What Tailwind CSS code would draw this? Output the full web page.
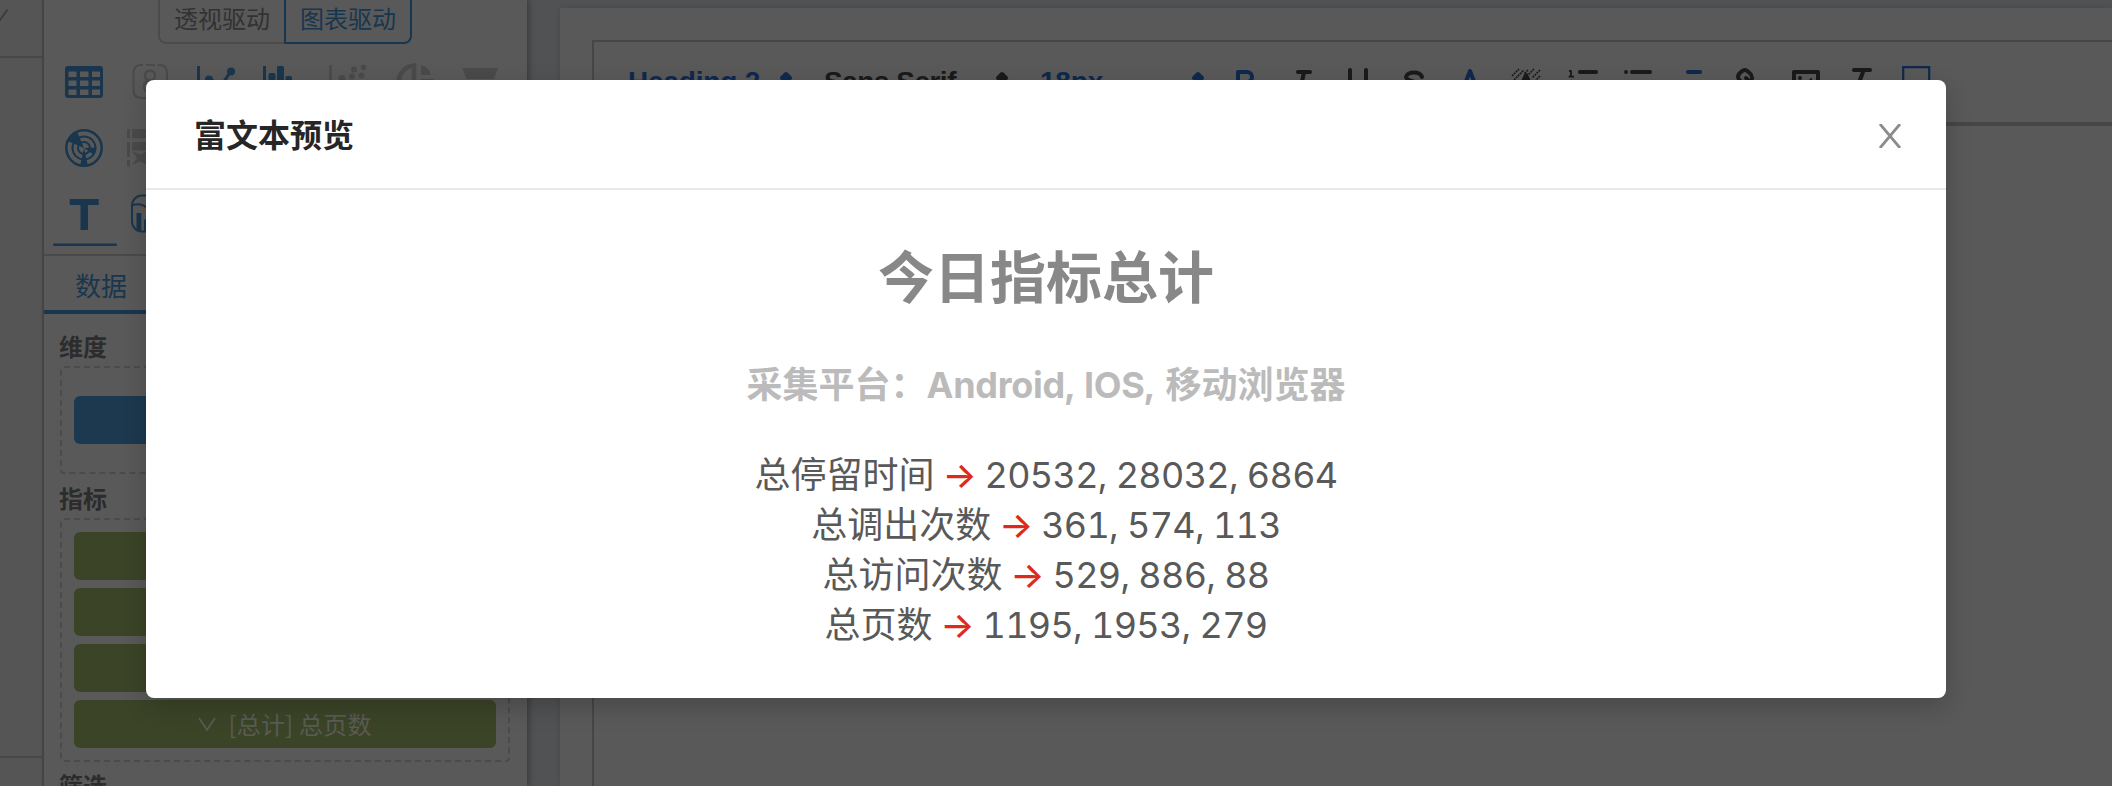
<!DOCTYPE html>
<html lang="zh"><head><meta charset="utf-8"><title>富文本预览</title>
<script src="https://cdn.jsdelivr.net/npm/@tailwindcss/browser@4"></script></head>
<body class="relative h-[786px] w-[2112px] overflow-hidden bg-[#505254] font-['Inter','Noto_Sans_CJK_SC',sans-serif]">
<div class="flex h-full" aria-hidden="true">
  <!-- far left strip -->
  <div class="flex w-[44px] shrink-0 flex-col border-r-2 border-[#484848] bg-[#555555]">
    <div class="h-[58px] shrink-0 border-b-2 border-[#484848]"><svg class="h-[50px] w-[20px]" viewBox="0 0 20 50"><path d="M-2 23L7.500 9.500" stroke="#3c3c3c" stroke-width="1.800"/></svg></div>
    <div class="h-[700px] shrink-0 border-b-2 border-[#484848]"></div>
  </div>
  <!-- chart configuration panel -->
  <div class="flex w-[483px] shrink-0 flex-col bg-[#595959] shadow-[2px_0_6px_rgba(0,0,0,0.3)]">
    <div class="flex h-[44px] shrink-0 pl-[114px] text-[24px] leading-[40px]">
      <div class="w-[126px] rounded-bl-lg border-b-2 border-l-2 border-[#4b4b4b] text-center text-[#323232]">透视驱动</div>
      <div class="w-[128px] rounded-br-lg border-2 border-t-0 border-[#17364f] text-center text-[#17364f]">图表驱动</div>
    </div>
    <div class="h-[212px] shrink-0 border-b-2 border-[#4a4a4a]">
      <svg class="block h-[210px] w-[483px]" viewBox="44 44 483 210" fill="none">
        <rect x="65" y="66" width="38" height="32" rx="3" fill="#19364e"/>
        <path fill="#595959" d="M68.500 71.500h8v5.500h-8zM80 71.500h8.500v5.500H80zM92 71.500h8v5.500h-8zM68.500 80.500h8v5.500h-8zM80 80.500h8.500v5.500H80zM92 80.500h8v5.500h-8zM68.500 89.500h8v5.500h-8zM80 89.500h8.500v5.500H80zM92 89.500h8v5.500h-8z"/>
        <path d="M143 65h-2q-7.500 0-7.500 8v17q0 8 8 8h18q7.500 0 7.500-8V73q0-8-7.500-8h-2M146 65h9" stroke="#4a4a4a" stroke-width="2"/>
        <circle cx="150" cy="75.500" r="5" stroke="#4a4a4a" stroke-width="2.500"/><circle cx="150" cy="86.500" r="6" stroke="#4a4a4a" stroke-width="2.500"/>
        <g stroke="#19364e" stroke-width="3"><path d="M198.500 66v32M264.500 66v32M203 87l7-8 11 7 10-15"/></g>
        <g fill="#19364e"><circle cx="209" cy="79.500" r="4"/><circle cx="231" cy="71.500" r="4"/><rect x="268.500" y="73" width="7" height="24" rx="2"/><rect x="277" y="66" width="7" height="30" rx="1.500"/><rect x="285.500" y="76" width="6.500" height="20" rx="2"/></g>
        <path d="M330.500 65v32" stroke="#4a4a4a" stroke-width="2.500"/>
        <g fill="#4a4a4a"><circle cx="342" cy="78.500" r="3.500"/><circle cx="352" cy="76.500" r="3"/><circle cx="361.500" cy="75.500" r="3"/><circle cx="354" cy="69.500" r="3"/><circle cx="363.500" cy="67.500" r="2.700"/><path d="M421 65.500a10 10 0 0 1 9.500 9.500h-9.500zM462.500 68h35.500l-4 11h-27.500zM421 79h12.500v4H421z"/></g>
        <path d="M398.500 83a17 17 0 0 1 15.500-17.500V83" stroke="#4a4a4a" stroke-width="4.500"/>
        <g stroke="#19364e"><circle cx="84" cy="148" r="17.700" stroke-width="2.500"/><circle cx="84" cy="148" r="11.500" stroke-width="2"/><circle cx="84" cy="148" r="6" stroke-width="2"/></g>
        <path d="M84 148L67.500 141l9.500-9.500zM84 148l12-.5-2.500 7zM84 148l-4 18h8z" fill="#19364e"/>
        <path d="M127 129h3v9.300h-3zM132 129h16v9.300h-16zM127 142h3v15h-3zM132 142h16v8.500h-16zM127 160h3v6.500h-3zM132 151l8 3.500 8-3.500v14l-8-3.500-8 3.500 5-7z" fill="#4a4a4a"/>
        <path d="M69.700 199h29v6H88v25h-7.500v-25H69.700z" fill="#19364e"/>
        <rect x="132" y="195.500" width="34" height="36" rx="10" stroke="#19364e" stroke-width="2"/><path d="M133 205q9-2.500 15 4" stroke="#19364e" stroke-width="2"/><path d="M136.500 213h4.800v17h-4.800zM144 219.500h4v12h-4z" fill="#19364e"/>
        <rect x="53" y="243.500" width="64" height="2.500" rx="1.200" fill="#19364e"/>
      </svg>
    </div>
    <div class="h-[58px] shrink-0 border-b-4 border-[#19364e] pl-[31px] text-[26px] leading-[61px] text-[#19364e]">数据</div>
    <div class="px-4 text-[24px]">
      <div class="h-[52px] pt-[14px] font-bold leading-[40px] text-[#2c2c2c]"><span class="-ml-px">维度</span></div>
      <div class="h-[108px] w-[450px] rounded border-2 border-dashed border-[#4b4b4b] px-3 pt-7"><div class="h-12 rounded-md bg-[#1d394f]"></div></div>
      <div class="h-[44px] font-bold leading-[52px] text-[#2c2c2c]"><span class="-ml-px">指标</span></div>
      <div class="flex h-[244px] w-[450px] flex-col gap-2 rounded border-2 border-dashed border-[#4b4b4b] px-3 pt-3">
        <div class="h-12 shrink-0 rounded-md bg-[#3b4427]"></div><div class="h-12 shrink-0 rounded-md bg-[#3b4427]"></div><div class="h-12 shrink-0 rounded-md bg-[#3b4427]"></div>
        <div class="flex h-12 shrink-0 items-center justify-center gap-3 rounded-md bg-[#3b4427] text-[#595b54]"><svg class="h-4 w-[18px]" viewBox="0 0 18 16" fill="none" stroke="currentColor" stroke-width="1.800"><path d="M1 2l8 12 8-12"/></svg><span class="font-['Noto_Sans_CJK_SC',sans-serif] tracking-[0.2px]">[总计] 总页数</span></div>
      </div>
      <div class="h-[24px] font-bold leading-[50px] text-[#2c2c2c]"><span class="-ml-px">筛选</span></div>
    </div>
  </div>
  <!-- rich text editor -->
  <div class="flex-1 pl-[33px] pt-2">
    <div class="h-full bg-[#595959] pl-8 pt-8 shadow-[0_0_6px_rgba(0,0,0,0.12)]">
      <div class="h-full border-l-2 border-t-2 border-[#464646]">
        <div class="flex h-[84px] border-b-4 border-[#464646] pt-[22px] font-['Liberation_Sans',sans-serif] text-[28px] font-bold leading-[36px] text-[#1a1a1a]">
          <div class="flex w-[192px] shrink-0 pl-[34px] text-[#0f284c]"><span class="w-[141px] whitespace-nowrap tracking-[-0.2px]">Heading 2</span></div>
          <svg class="-ml-[18px] h-9 w-9 shrink-0" viewBox="0 0 18 18" fill="#0f284c" stroke="#0f284c" stroke-width="2" stroke-linejoin="round"><path d="M7 7l2-2 2 2zM7 11l2 2 2-2z"/></svg>
          <div class="w-[180px] shrink-0 whitespace-nowrap pl-5 tracking-[-0.5px]">Sans Serif</div>
          <svg class="h-9 w-9 shrink-0" viewBox="0 0 18 18" fill="#1a1a1a" stroke="#1a1a1a" stroke-width="2" stroke-linejoin="round"><path d="M7 7l2-2 2 2zM7 11l2 2 2-2z"/></svg>
          <div class="w-[160px] shrink-0 pl-5 tracking-[-0.2px] text-[#0f284c]">18px</div>
          <svg class="h-9 w-9 shrink-0" viewBox="0 0 18 18" fill="#0f284c" stroke="#0f284c" stroke-width="2" stroke-linejoin="round"><path d="M7 7l2-2 2 2zM7 11l2 2 2-2z"/></svg>
          <svg class="ml-3 h-9 w-[720px] shrink-0" viewBox="0 0 360 18" fill="none" stroke="#1a1a1a" stroke-width="2" stroke-linecap="round" stroke-linejoin="round">
            <path stroke="#0f284c" d="M5 4H9.500A2.500 2.500 0 0 1 12 6.500A2.500 2.500 0 0 1 9.500 9H5ZM5 9h5.500a2.500 2.500 0 0 1 0 5H5Z"/>
            <g transform="translate(28)"><path d="M7 4h6M5 14h6M8 14L10 4"/></g>
            <g transform="translate(56)"><path d="M5 3v6a4 4 0 0 0 8 0V3"/></g>
            <g transform="translate(84)"><path d="M13 6.500C12 3.500 6 3.500 5 6.500c0 2.500 8 2 8 5.500-1 3-7 3-8 0"/></g>
            <g transform="translate(112)"><path stroke="#0f284c" d="M5.500 12.500L9 3.500l3.500 9M6 10h6"/></g>
            <g transform="translate(140)"><path stroke-width=".8" stroke-linecap="butt" stroke-dasharray="1 .4" d="M2 6l3.500-3.500M2 9l6-6M10 3l-2 2M13 2.500l-3 3M16 3l-4 4M16 6l-3 3"/><path d="M6 12L9 5.500l3 6.500"/></g>
            <g transform="translate(168)"><path d="M8 4h8M8 9h8M8 14h8"/><path stroke-width=".9" stroke-linecap="butt" d="M2.500 3.500h1v3M2.300 6.300h2.700M2.500 8.700q2-1 2 1l-2 2h2.500"/></g>
            <g transform="translate(196)"><path d="M6 4h9M6 9h9M6 14h9M3 4h.01M3 9h.01M3 14h.01"/></g>
            <g transform="translate(224)" stroke="#0f284c"><path d="M6 4h6M3 9h12M4 14h10"/></g>
            <g transform="translate(252)"><path d="M7 7l4 4M8.900 4.577a3.476 3.476 0 0 1 .36 4.679A3.476 3.476 0 0 1 4.577 8.900C3.185 7.500 2.035 6.400 4.217 4.217S7.500 3.185 8.900 4.577Z"/></g>
            <g transform="translate(280)"><path d="M3 4h12v10H3z"/><circle cx="6" cy="7" r="1" fill="#1a1a1a" stroke="none"/><path stroke-width="1" d="M5 12l3-3 2 1 1.500-2.500L13 12"/></g>
            <g transform="translate(308)"><path d="M5 3h8M6.500 12L9.500 4"/></g>
            <path stroke="#0f284c" stroke-width="1.100" stroke-linejoin="miter" d="M337.600 1.600h13v14h-13z"/>
          </svg>
        </div>
      </div>
    </div>
  </div>
</div>
<!-- preview dialog -->
<div role="dialog" class="absolute left-[146px] top-[80px] flex h-[618px] w-[1800px] flex-col rounded-lg bg-white shadow-[0_8px_24px_rgba(0,0,0,0.2)]">
  <div class="flex h-[110px] shrink-0 items-center justify-between border-b-2 border-[#e8e8e8] pl-12 pr-[44px]">
    <h1 class="pb-[3px] font-['Noto_Sans_CJK_SC',sans-serif] text-[32px] font-semibold text-[#262626]">富文本预览</h1>
    <svg class="mt-1 h-6 w-6" viewBox="0 0 24 24" fill="none" stroke="#8c8c8c" stroke-width="2.800"><path d="M2 0L22 24M22 0L2 24"/></svg>
  </div>
  <div class="flex flex-col items-center whitespace-nowrap text-[36px] leading-[50px] tabular-nums text-[#595959]">
    <h2 class="mt-[48px] text-[56px] font-bold leading-[80px] text-[#888888]">今日指标总计</h2>
    <h3 class="mt-[42px] flex font-bold text-[#bbbbbb]"><span>采集平台：</span><span class="w-[239px] tracking-[-0.25px]">Android, IOS,</span><span>移动浏览器</span></h3>
    <div class="mt-[40px] flex"><span>总停留时间</span><span class="w-[50px] text-center font-medium text-[#dd2a1c]">→</span><span class="tracking-[-0.7px]">20532, 28032, 6864</span></div>
    <div class="flex"><span>总调出次数</span><span class="w-[50px] text-center font-medium text-[#dd2a1c]">→</span><span class="tracking-[-0.7px]">361, 574, 113</span></div>
    <div class="flex"><span>总访问次数</span><span class="w-[50px] text-center font-medium text-[#dd2a1c]">→</span><span class="tracking-[-0.7px]">529, 886, 88</span></div>
    <div class="flex"><span>总页数</span><span class="w-[50px] text-center font-medium text-[#dd2a1c]">→</span><span class="tracking-[-0.7px]">1195, 1953, 279</span></div>
  </div>
</div>
</body></html>
